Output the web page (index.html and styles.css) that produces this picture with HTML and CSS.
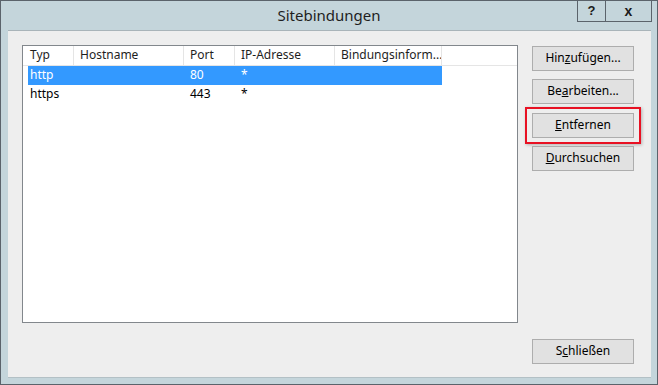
FILE: index.html
```html
<!DOCTYPE HTML>
<html>
<head>
    <meta charset="UTF-8">
    <title>Sitebindungen</title>
    <link rel="stylesheet" href="styles.css">
</head>
<body>
    <div class="window">
        <div class="titlebar">
            <div class="title">Sitebindungen</div>
            <div class="caption-btns">
                <div class="cap-btn help">?</div>
                <div class="cap-btn close">x</div>
            </div>
        </div>
        <div class="client">
            <div class="listview">
                <div class="lv-head">
                    <div class="col c1">Typ</div>
                    <div class="col c2">Hostname</div>
                    <div class="col c3">Port</div>
                    <div class="col c4">IP-Adresse</div>
                    <div class="col c5">Bindungsinform...</div>
                    <div class="col rest"></div>
                </div>
                <ul class="lv-rows">
                    <li class="row selected">
                        <span class="cell c1">http</span>
                        <span class="cell c2"></span>
                        <span class="cell c3">80</span>
                        <span class="cell c4">*</span>
                        <span class="cell c5"></span>
                    </li>
                    <li class="row">
                        <span class="cell c1">https</span>
                        <span class="cell c2"></span>
                        <span class="cell c3">443</span>
                        <span class="cell c4">*</span>
                        <span class="cell c5"></span>
                    </li>
                </ul>
            </div>
            <div class="buttons">
                <div class="btn">Hin<u>z</u>ufügen...</div>
                <div class="btn">Be<u>a</u>rbeiten...</div>
                <div class="mark">
                    <div class="btn"><u>E</u>ntfernen</div>
                </div>
                <div class="btn"><u>D</u>urchsuchen</div>
                <div class="btn close-btn">S<u>c</u>hließen</div>
            </div>
        </div>
    </div>
</body>
</html>
```
FILE: styles.css
```css
body{margin:0;font-family:"Noto Sans","Liberation Sans",sans-serif;}
ul,li{margin:0;padding:0;list-style:none;}

.window{
    box-sizing:border-box;
    width:658px;
    height:385px;
    border:1px solid #5b636b;
    background-color:#c4d5db;
    display:flex;
    flex-direction:column;
}
.titlebar{
    height:29px;
    display:grid;
    grid-template-columns:1fr auto 1fr;
    align-items:start;
}
.titlebar .title{
    grid-column:2;
    padding-top:4px;
    font-size:15px;
    color:#1e1e1e;
    line-height:20px;
}
.caption-btns{
    grid-column:3;
    justify-self:end;
    display:flex;
    margin-right:5px;
    border:1px solid #5b636b;
    border-top:none;
    height:20px;
}
.cap-btn{
    font-family:"Liberation Sans",sans-serif;
    font-weight:bold;
    font-size:13px;
    line-height:20px;
    text-align:center;
    color:#1a1a1a;
}
.cap-btn.help{
    width:27px;
    border-right:1px solid #5b636b;
}
.cap-btn.close{
    width:45px;
    font-size:14px;
}

.client{
    flex:1;
    margin:0 6px 6px 7px;
    background-color:#eeeeee;
    border-top:1px solid #a9b4b9;
    border-bottom:1px solid #b3c0c5;
    display:flex;
    padding:14px 0 0 14px;
    font-size:12px;
}
.listview{
    box-sizing:border-box;
    width:496px;
    height:278px;
    border:1px solid #82878c;
    background-color:#fff;
}
.lv-head{
    display:flex;
    height:19px;
    border-bottom:1px solid #e5e5e5;
    line-height:18px;
    color:#1e1e1e;
}
.lv-head .col{
    box-sizing:border-box;
    border-right:1px solid #e5e5e5;
    padding-left:6px;
    white-space:nowrap;
    overflow:hidden;
}
.lv-head .c1{width:51px;padding-left:7px;}
.lv-head .c2{width:110px;}
.lv-head .c3{width:51px;}
.lv-head .c4{width:100px;}
.lv-head .c5{width:107px;}
.lv-head .rest{flex:1;border-right:none;}

.lv-rows{padding-left:5px;}
.row{
    display:flex;
    width:414px;
    height:19px;
    line-height:18px;
    color:#000;
}
.row.selected{
    background-color:#3399ff;
    color:#fff;
}
.row .cell{box-sizing:border-box;padding-left:6px;}
.row .c1{width:46px;padding-left:2px;}
.row .c2{width:110px;}
.row .c3{width:51px;}
.row .c4{width:100px;}
.row .c5{width:107px;}

.buttons{
    display:flex;
    flex-direction:column;
    margin-left:14px;
    padding:1px 0 13px;
    width:102px;
}
.btn{
    box-sizing:border-box;
    width:102px;
    height:25px;
    border:1px solid #adadad;
    background-color:#e1e1e1;
    text-align:center;
    line-height:22px;
    color:#000;
}
.btn + .btn{margin-top:8px;}
.mark{
    margin:3px -7px 0 -7px;
    padding:4px 5px;
    border:2px solid #e81123;
    box-shadow:1px 1px 3px rgba(0,0,0,0.25);
}
.mark + .btn{margin-top:2px;}
.buttons .close-btn{margin-top:auto;}
```
